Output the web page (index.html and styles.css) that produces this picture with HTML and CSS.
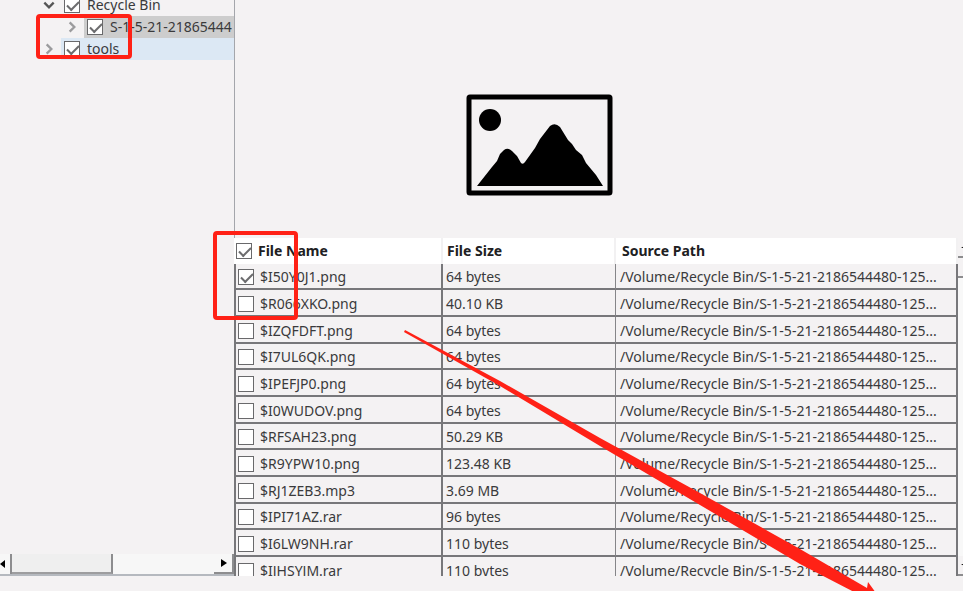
FILE: index.html
```html
<!DOCTYPE html>
<html lang="en">
<head>
<meta charset="utf-8">
<title>File Recovery</title>
<link rel="stylesheet" href="styles.css">
</head>
<body>
<div class="app">
  <aside class="sidebar">
    <ul class="tree">
      <li class="node">
        <button class="toggle open" aria-label="Collapse"><svg viewBox="0 0 12 12"><path d="M2 4l4 4 4-4"/></svg></button>
        <label class="item"><input type="checkbox" checked>Recycle Bin</label>
      </li>
      <li class="node child">
        <button class="toggle" aria-label="Expand"><svg viewBox="0 0 12 12"><path d="M4 2l4 4-4 4"/></svg></button>
        <label class="item selected"><input type="checkbox" checked>S-1-5-21-21865444</label>
      </li>
      <li class="node">
        <button class="toggle" aria-label="Expand"><svg viewBox="0 0 12 12"><path d="M4 2l4 4-4 4"/></svg></button>
        <label class="item hovered"><input type="checkbox" checked>tools</label>
      </li>
    </ul>
    <div class="hscroll">
      <button class="step" aria-label="Scroll left"><svg viewBox="0 0 6 10"><path d="M5 1v8L0 5z"/></svg></button>
      <div class="thumb"></div>
      <button class="step right" aria-label="Scroll right"><svg viewBox="0 0 6 10"><path d="M0 1v8l6-4z"/></svg></button>
    </div>
  </aside>
  <main class="content">
    <div class="preview">
      <svg class="picture" viewBox="0 0 148 102">
        <rect x="3" y="3" width="141" height="96" rx="1" fill="none" stroke="#000" stroke-width="5"/>
        <circle cx="24" cy="26" r="11"/>
        <path d="M11 92L26 73 31 67 34 60 38 56Q42 53 46 57L51 62 55 69Q57 71 59 68L69 54 74 45 84 32Q89 28 94 33L102 46 106 50 110 56 116 61 120 69 130 81 137 92z"/>
      </svg>
    </div>
    <div class="list">
      <table class="files">
        <colgroup><col class="c-name"><col class="c-size"><col></colgroup>
        <thead>
          <tr><th><label><input type="checkbox" checked>File Name</label></th><th>File Size</th><th>Source Path</th></tr>
        </thead>
        <tbody>
          <tr><td><label><input type="checkbox" checked>$I50Y0J1.png</label></td><td>64 bytes</td><td>/Volume/Recycle Bin/S-1-5-21-2186544480-125...</td></tr>
          <tr><td><label><input type="checkbox">$R066XKO.png</label></td><td>40.10 KB</td><td>/Volume/Recycle Bin/S-1-5-21-2186544480-125...</td></tr>
          <tr><td><label><input type="checkbox">$IZQFDFT.png</label></td><td>64 bytes</td><td>/Volume/Recycle Bin/S-1-5-21-2186544480-125...</td></tr>
          <tr><td><label><input type="checkbox">$I7UL6QK.png</label></td><td>64 bytes</td><td>/Volume/Recycle Bin/S-1-5-21-2186544480-125...</td></tr>
          <tr><td><label><input type="checkbox">$IPEFJP0.png</label></td><td>64 bytes</td><td>/Volume/Recycle Bin/S-1-5-21-2186544480-125...</td></tr>
          <tr><td><label><input type="checkbox">$I0WUDOV.png</label></td><td>64 bytes</td><td>/Volume/Recycle Bin/S-1-5-21-2186544480-125...</td></tr>
          <tr><td><label><input type="checkbox">$RFSAH23.png</label></td><td>50.29 KB</td><td>/Volume/Recycle Bin/S-1-5-21-2186544480-125...</td></tr>
          <tr><td><label><input type="checkbox">$R9YPW10.png</label></td><td>123.48 KB</td><td>/Volume/Recycle Bin/S-1-5-21-2186544480-125...</td></tr>
          <tr><td><label><input type="checkbox">$RJ1ZEB3.mp3</label></td><td>3.69 MB</td><td>/Volume/Recycle Bin/S-1-5-21-2186544480-125...</td></tr>
          <tr><td><label><input type="checkbox">$IPI71AZ.rar</label></td><td>96 bytes</td><td>/Volume/Recycle Bin/S-1-5-21-2186544480-125...</td></tr>
          <tr><td><label><input type="checkbox">$I6LW9NH.rar</label></td><td>110 bytes</td><td>/Volume/Recycle Bin/S-1-5-21-2186544480-125...</td></tr>
          <tr><td><label><input type="checkbox">$IJHSYJM.rar</label></td><td>110 bytes</td><td>/Volume/Recycle Bin/S-1-5-21-2186544480-125...</td></tr>
        </tbody>
      </table>
      <div class="vscroll">
        <button class="vstep" aria-label="Scroll up"><svg viewBox="0 0 6 6"><path d="M3 4h3V2z"/></svg></button>
        <div class="vthumb"></div>
        <div class="vtrack"></div>
        <button class="vstep down" aria-label="Scroll down"><svg viewBox="0 0 6 6"><path d="M3 2h3v2z"/></svg></button>
      </div>
    </div>
  </main>
</div>
<svg class="marks" width="963" height="591" viewBox="0 0 963 591">
  <g fill="none" stroke="#ff2116" stroke-width="4">
    <rect x="38" y="16" width="92" height="41" rx="2"/>
    <rect x="215" y="233" width="81" height="85" rx="2"/>
  </g>
  <path fill="#ff2116" d="M405 330L500 381 600 438 700 493 800 549 867 588 868 582 876 593 856 593 800 564 700 505 600 446 500 386 404 332z"/>
</svg>
</body>
</html>
```

FILE: styles.css
```css
* {
  box-sizing: border-box;
}

body {
  margin: 0;
  height: 100vh;
  overflow: hidden;
  position: relative;
  background: #f4f2f3;
  color: #3a3a3c;
  font: 14px/20px "Noto Sans", "Open Sans", sans-serif;
}

button {
  border: 0;
  padding: 0;
  background: none;
}

.app {
  display: grid;
  grid-template-columns: 234px minmax(0, 1fr);
  height: calc(100vh - 15px);
  overflow: hidden;
}

.sidebar {
  display: flex;
  flex-direction: column;
  justify-content: space-between;
  min-width: 0;
  overflow: hidden;
  border-bottom: 2px solid #b5b9bf;
}

.tree {
  list-style: none;
  margin: -6px 0 0;
  padding: 0 0 0 42px;
}

.node {
  display: flex;
  align-items: center;
  height: 22px;
}

.child {
  padding-left: 23px;
}

.toggle {
  width: 14px;
  height: 14px;
  flex: none;
  margin-right: 5px;
}

.toggle svg {
  display: block;
  width: 14px;
  height: 14px;
  fill: none;
  stroke: #9b9b9d;
  stroke-width: 2;
}

.toggle.open svg {
  stroke: #555;
}

.item {
  display: flex;
  align-items: center;
  flex: 1;
  gap: 7px;
  height: 22px;
  padding-left: 3px;
  white-space: nowrap;
  overflow: hidden;
}

.selected {
  background: #cdcdcd;
}

.hovered {
  background: #dce8f4;
}

input {
  appearance: none;
  flex: none;
  display: block;
  width: 16px;
  height: 16px;
  margin: 0;
  border: 1px solid #69696b;
  background: #fff;
}

input:checked::before {
  content: "";
  display: block;
  width: 10px;
  height: 5px;
  margin: 3px 0 0 2px;
  border: solid #6c6c6e;
  border-width: 0 0 2px 2px;
  transform: rotate(-45deg);
}

.hscroll {
  display: flex;
  height: 20px;
  background: #f7f7f7;
}

.step {
  width: 12px;
  border-right: 2px solid #8d8d8f;
}

.step svg {
  display: block;
  width: 6px;
  height: 10px;
}

.step.right {
  width: 20px;
  margin-left: auto;
  padding-left: 7px;
  border-bottom: 2px solid #8d8d8f;
}

.thumb {
  width: 101px;
  background: #efefef;
  border-right: 2px solid #8d8d8f;
  border-bottom: 2px solid #9d9d9f;
}

.content {
  display: flex;
  flex-direction: column;
  min-width: 0;
  overflow: hidden;
}

.preview {
  flex: none;
  height: 238px;
  padding: 94px 0 0 231px;
  border-left: 1px solid #a4a6ab;
}

.picture {
  display: block;
  width: 148px;
  height: 102px;
}

.list {
  display: flex;
  align-items: flex-start;
}

.files {
  flex: 1;
  width: 100%;
  table-layout: fixed;
  border-collapse: separate;
  border-spacing: 0;
}

.c-name {
  width: 209px;
}

.c-size {
  width: 173px;
}

th,
td {
  padding: 0 0 0 4px;
  white-space: nowrap;
  text-align: left;
  overflow: hidden;
}

th {
  height: 26px;
  background: #fff;
  color: #202022;
  font-weight: 700;
  border-right: 2px solid #f2f1f2;
}

td {
  height: 27px;
  padding-top: 2px;
  border-right: 2px solid #77777a;
  border-bottom: 2px solid #77777a;
}

tr:nth-child(3n + 1) td {
  height: 26px;
}

td:first-child {
  border-left: 2px solid #77777a;
  padding-left: 2px;
}

td:nth-child(2) {
  border-right: 1px solid #858588;
  padding-left: 3px;
}

th:first-child {
  padding-left: 2px;
}

th:nth-child(3) {
  padding-left: 6px;
}

td label,
th label {
  display: flex;
  align-items: center;
  gap: 6px;
}

.vscroll {
  display: flex;
  flex-direction: column;
  width: 5px;
  height: 338px;
  flex: none;
}

.vstep {
  height: 20px;
  border-bottom: 2px solid #8d8d8f;
}

.vstep svg {
  display: block;
  width: 6px;
  height: 6px;
}

.vthumb {
  height: 20px;
  border-bottom: 2px solid #8d8d8f;
}

.vtrack {
  flex: 1;
  background: #f8f8f8;
}

.marks {
  position: absolute;
  top: 0;
  left: 0;
  pointer-events: none;
}
```
